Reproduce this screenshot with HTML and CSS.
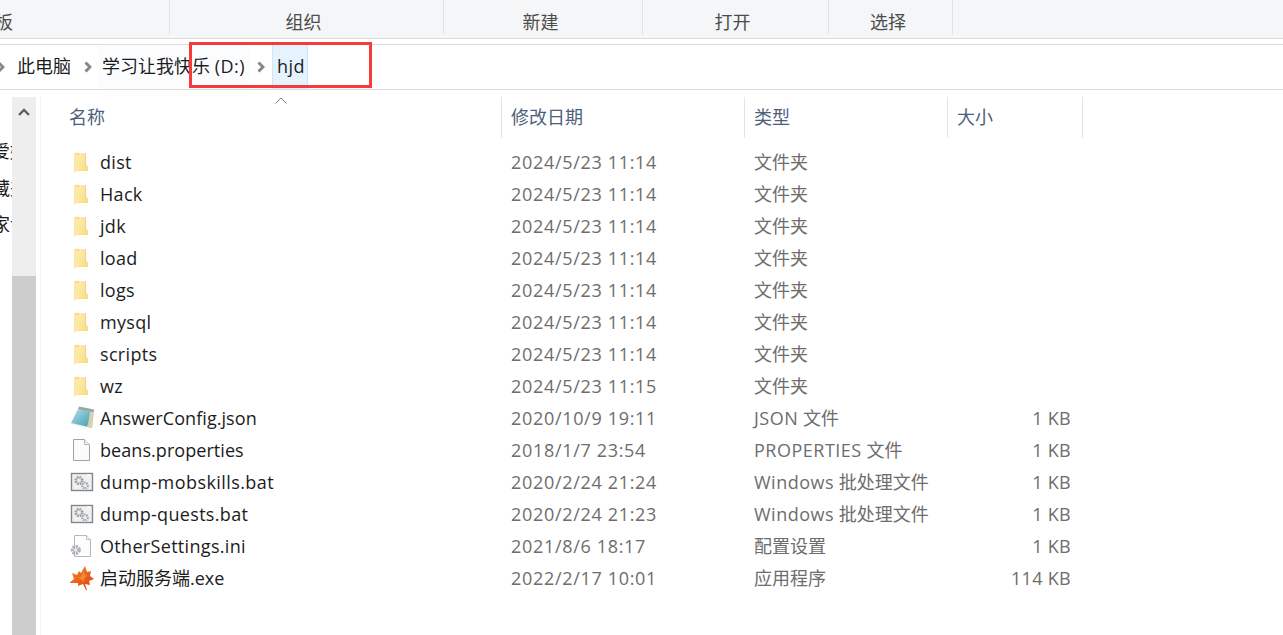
FILE: index.html
```html
<!DOCTYPE html>
<html lang="zh">
<head>
<meta charset="utf-8">
<title>hjd</title>
<link rel="stylesheet" href="styles.css">
</head>
<body>
<svg class="defs" width="0" height="0" aria-hidden="true">
  <defs>
    <linearGradient id="fy" x1="0" y1="0" x2="1" y2="1"><stop offset="0" stop-color="#fdedb4"/><stop offset="1" stop-color="#f9da7e"/></linearGradient>
    <linearGradient id="nb" x1="0" y1="0" x2="1" y2="1"><stop offset="0" stop-color="#b4e0ea"/><stop offset="1" stop-color="#3f9db5"/></linearGradient>
    <linearGradient id="lf" x1="0" y1="0" x2="1" y2="1"><stop offset="0" stop-color="#f7892c"/><stop offset="1" stop-color="#e03c10"/></linearGradient>
    <symbol id="i-folder" viewBox="0 0 24 24">
      <path d="M4 3h12v12l2 1v5H8z" fill="#f7d677"/>
      <path d="M9 3h6v13h3v5H9z" fill="url(#fy)"/>
      <path d="M4 3l5 2v15l-5 3z" fill="#fce9a6"/>
    </symbol>
    <symbol id="i-note" viewBox="0 0 24 24">
      <path d="M9 1l15 3-2 18-5-1z" fill="#c9c59e"/>
      <path d="M1 16.500 17 20l-.5 2L1 18z" fill="#f1f3ec"/>
      <path d="M8 3l13 2.500-4 15L1 17z" fill="url(#nb)"/>
      <path d="M9 .5l15 3-.5 2.500L8 3z" fill="#9aa5a5"/>
      <path d="M20 6l3 0-1 15-4 0z" fill="#d6d2b0"/>
    </symbol>
    <symbol id="i-page" viewBox="0 0 24 24">
      <path d="M3.500 1.500h11l5 5v16h-16z" fill="#fbfbfb" stroke="#a0a0a0"/>
      <path d="M14.500 1.500v5h5" fill="#f1f1f1" stroke="#b8b8b8"/>
    </symbol>
    <symbol id="i-bat" viewBox="0 0 24 24">
      <rect x="1.500" y="3.500" width="21" height="17" fill="#eef1f4" stroke="#868686" stroke-width="1.400"/>
      <rect x="17" y="4.500" width="4" height="1.200" fill="#fff"/>
      <circle cx="9" cy="10.500" r="3.200" fill="none" stroke="#9a9fa4" stroke-width="2.800" stroke-dasharray="1.700 .8"/>
      <circle cx="15" cy="15.500" r="2.700" fill="none" stroke="#a4a9ae" stroke-width="2.400" stroke-dasharray="1.500 .8"/>
    </symbol>
    <symbol id="i-ini" viewBox="0 0 24 24">
      <path d="M4.500 1.500h12l4 4v17h-16z" fill="#fdfdfd" stroke="#b4b8bd"/>
      <path d="M16.500 1.500v4h4" fill="#eef0f2" stroke="#c0c0c0"/>
      <circle cx="5.800" cy="16" r="3.300" fill="#eef0f2" stroke="#aeb3b8" stroke-width="3.600" stroke-dasharray="2.100 .9"/>
    </symbol>
    <symbol id="i-leaf" viewBox="0 0 24 24">
      <path d="M15 0l2 6 4-1-1 5 4 3-5 2 1 4-5-1 2 6h-1l-3-6-5 2 0-3-9 0 5-4-2-6 5 2 2-4 2 2z" fill="url(#lf)"/>
      <path d="M14 4l.5 5 3 .5-3 2.500-1 4-2.500-3-4-1 4-1z" fill="#f7a13e" opacity=".65"/>
    </symbol>
  </defs>
</svg>

<header class="ribbon">
  <div class="group g-a"><span>板</span></div>
  <div class="group g-b"><span>组织</span></div>
  <div class="group g-c"><span>新建</span></div>
  <div class="group g-d"><span>打开</span></div>
  <div class="group g-e"><span>选择</span></div>
</header>

<nav class="address">
  <svg class="chev chev-first" viewBox="0 0 8 12"><path d="M1.500 1.500 6 6l-4.500 4.500" /></svg>
  <span class="crumb crumb-pc">此电脑</span>
  <svg class="chev" viewBox="0 0 8 12"><path d="M1.500 1.500 6 6l-4.500 4.500" /></svg>
  <span class="crumb crumb-drive">学习让我快乐&nbsp;<span class="lat">(D:)</span></span>
  <svg class="chev" viewBox="0 0 8 12"><path d="M1.500 1.500 6 6l-4.500 4.500" /></svg>
  <span class="crumb crumb-on"><span class="lat">hjd</span></span>
  <div class="redbox"></div>
</nav>

<main class="body">
  <aside class="side">
    <div class="side-text">
      <span>收藏爱好</span>
      <span>收藏夹</span>
      <span>家访</span>
    </div>
    <div class="scroll">
      <svg class="scroll-up" viewBox="0 0 12 8"><path d="M1 7l5-5 5 5"/></svg>
      <div class="thumb"></div>
    </div>
  </aside>

  <section class="list">
    <div class="head">
      <div class="hcell hname">名称<svg class="sort" viewBox="0 0 12 7"><path d="M.5 6.500 6 1l5.500 5.500"/></svg></div>
      <div class="hcell">修改日期</div>
      <div class="hcell">类型</div>
      <div class="hcell">大小</div>
    </div>
    <div class="rows">
      <div class="row"><div class="name"><svg class="ico"><use href="#i-folder"/></svg>dist</div><div class="dim date">2024/5/23 11:14</div><div class="dim">文件夹</div><div class="size"></div></div>
      <div class="row"><div class="name"><svg class="ico"><use href="#i-folder"/></svg>Hack</div><div class="dim date">2024/5/23 11:14</div><div class="dim">文件夹</div><div class="size"></div></div>
      <div class="row"><div class="name"><svg class="ico"><use href="#i-folder"/></svg>jdk</div><div class="dim date">2024/5/23 11:14</div><div class="dim">文件夹</div><div class="size"></div></div>
      <div class="row"><div class="name"><svg class="ico"><use href="#i-folder"/></svg>load</div><div class="dim date">2024/5/23 11:14</div><div class="dim">文件夹</div><div class="size"></div></div>
      <div class="row"><div class="name"><svg class="ico"><use href="#i-folder"/></svg>logs</div><div class="dim date">2024/5/23 11:14</div><div class="dim">文件夹</div><div class="size"></div></div>
      <div class="row"><div class="name"><svg class="ico"><use href="#i-folder"/></svg>mysql</div><div class="dim date">2024/5/23 11:14</div><div class="dim">文件夹</div><div class="size"></div></div>
      <div class="row"><div class="name"><svg class="ico"><use href="#i-folder"/></svg>scripts</div><div class="dim date">2024/5/23 11:14</div><div class="dim">文件夹</div><div class="size"></div></div>
      <div class="row"><div class="name"><svg class="ico"><use href="#i-folder"/></svg>wz</div><div class="dim date">2024/5/23 11:15</div><div class="dim">文件夹</div><div class="size"></div></div>
      <div class="row"><div class="name name-tight"><svg class="ico"><use href="#i-note"/></svg>AnswerConfig.json</div><div class="dim date">2020/10/9 19:11</div><div class="dim"><span class="lat">JSON</span> 文件</div><div class="size">1 KB</div></div>
      <div class="row"><div class="name name-tight"><svg class="ico"><use href="#i-page"/></svg>beans.properties</div><div class="dim date">2018/1/7 23:54</div><div class="dim"><span class="lat">PROPERTIES</span> 文件</div><div class="size">1 KB</div></div>
      <div class="row"><div class="name name-wide"><svg class="ico"><use href="#i-bat"/></svg>dump-mobskills.bat</div><div class="dim date">2020/2/24 21:24</div><div class="dim"><span class="lat">Windows</span> 批处理文件</div><div class="size">1 KB</div></div>
      <div class="row"><div class="name"><svg class="ico"><use href="#i-bat"/></svg>dump-quests.bat</div><div class="dim date">2020/2/24 21:23</div><div class="dim"><span class="lat">Windows</span> 批处理文件</div><div class="size">1 KB</div></div>
      <div class="row"><div class="name"><svg class="ico"><use href="#i-ini"/></svg>OtherSettings.ini</div><div class="dim date">2021/8/6 18:17</div><div class="dim">配置设置</div><div class="size">1 KB</div></div>
      <div class="row"><div class="name name-cjk"><svg class="ico"><use href="#i-leaf"/></svg>启动服务端.exe</div><div class="dim date">2022/2/17 10:01</div><div class="dim">应用程序</div><div class="size">114 KB</div></div>
    </div>
  </section>
</main>
</body>
</html>
```
FILE: styles.css
```css
* { box-sizing: border-box; }
html, body { margin: 0; height: 100%; }
body {
  width: 1283px;
  height: 635px;
  overflow: hidden;
  background: #fff;
  font-family: "Open Sans", "Noto Sans CJK SC", sans-serif;
  font-size: 18px;
  color: #1c1c1c;
}
.defs { position: absolute; }
.lat { letter-spacing: .5px; }

.ribbon {
  display: flex;
  height: 39px;
  background: #f5f6f7;
  border-bottom: 1px solid #dadbdc;
  color: #4c4c4c;
  font-size: 18px;
}
.group {
  height: 35px;
  border-right: 1px solid #e2e3e4;
  display: flex;
  align-items: flex-end;
  justify-content: center;
  line-height: 25px;
}
.g-a { width: 170px; justify-content: flex-start; overflow: hidden; }
.g-a span { margin-left: -5px; }
.g-b { width: 274px; padding-right: 6px; }
.g-c { width: 199px; padding-right: 5px; }
.g-d { width: 186px; padding-right: 6px; }
.g-e { width: 124px; padding-right: 5px; }

.address {
  position: relative;
  height: 46px;
  margin-top: 5px;
  border-top: 1px solid #dcdcdc;
  border-bottom: 1px solid #dcdcdc;
  display: flex;
  align-items: stretch;
}
.chev { width: 8px; height: 12px; align-self: center; fill: none; stroke: #878787; stroke-width: 3; flex: none; }
.chev-first { margin-left: -3px; margin-right: 12px; }
.crumb { display: flex; align-items: center; line-height: 1; white-space: pre; }
.crumb-pc { width: 67px; padding-bottom: 3px; }
.crumb-pc + .chev { margin-right: 7px; }
.crumb-drive { width: 150px; padding: 0 0 3px 3px; background: #fbfcfe; margin-right: 8px; }
.crumb-drive + .chev { margin-right: 7px; }
.crumb-on {
  width: 36px;
  padding: 0 0 3px 4px;
  background: #e5f3ff;
  border-left: 1px solid #cce8ff;
  border-right: 1px solid #cce8ff;
}
.redbox {
  position: absolute;
  left: 189px;
  top: -3px;
  width: 183px;
  height: 46px;
  border: 3px solid #f53b3b;
}

.body { display: flex; height: 545px; }
.side { width: 40px; display: flex; flex: none; }
.side-text {
  width: 12px;
  flex: none;
  padding-top: 46px;
  display: flex;
  flex-direction: column;
  align-items: flex-end;
  overflow: hidden;
  font-size: 18px;
}
.side-text span { display: block; height: 36.500px; line-height: 30px; white-space: nowrap; flex: none; margin-right: -16px; }
.scroll {
  position: relative;
  margin-top: 7px;
  width: 24px;
  background: #eeeeee;
  display: flex;
  flex-direction: column;
}
.scroll-up { width: 12px; height: 8px; margin: 11px 0 0 6px; fill: none; stroke: #606060; stroke-width: 2.400; flex: none; }
.thumb { height: 360px; margin-top: 160px; background: #cdcdcd; }

.list { flex: 1; border-left: 1px solid #f2f2f2; margin-top: 7px; min-width: 0; }
.head, .row { display: grid; grid-template-columns: 461px 243px 203px 135px; }
.head { height: 40px; }
.hcell {
  position: relative;
  border-right: 1px solid #e5e5e5;
  padding-left: 9px;
  color: #4d6079;
  line-height: 41px;
}
.hcell.hname { padding-left: 28px; }
.sort {
  position: absolute;
  left: 234px;
  top: 0;
  width: 12px;
  height: 7px;
  fill: none;
  stroke: #808080;
  stroke-width: 1;
}
.rows { padding-top: 9px; }
.row { height: 32px; line-height: 32px; white-space: nowrap; }
.row > div { padding-left: 9px; }
.name { display: flex; align-items: center; letter-spacing: .32px; }
.name-tight { letter-spacing: .06px; }
.name-wide { letter-spacing: .42px; }
.name-cjk { letter-spacing: 0; }
.row > .name { padding-left: 29px; }
.ico { width: 24px; height: 24px; margin-right: 6px; flex: none; }
.dim { color: #6d6d6d; }
.date { letter-spacing: .68px; }
.row > .size { color: #6d6d6d; text-align: right; padding: 0 12px 0 0; letter-spacing: .3px; }
```
